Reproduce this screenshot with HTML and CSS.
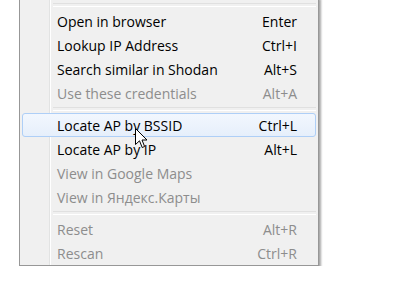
FILE: index.html
```html
<!DOCTYPE html>
<html lang="en">

<head>
    <meta charset="UTF-8">
    <meta name="viewport" content="width=device-width, initial-scale=1.0">
    <title>context menu</title>
    <link rel="stylesheet" href="styles.css">
</head>

<body>
    <div class="menu">

        <div class="sep"></div>

        <div class="item"><span class="label">Open in browser</span><span class="key">Enter</span></div>
        <div class="item"><span class="label">Lookup IP Address</span><span class="key">Ctrl+I</span></div>
        <div class="item"><span class="label">Search similar in Shodan</span><span class="key">Alt+S</span></div>
        <div class="item off"><span class="label">Use these credentials</span><span class="key">Alt+A</span></div>

        <div class="sep"></div>

        <div class="item hover"><span class="label">Locate AP by BSSID</span><span class="key">Ctrl+L</span>
            <svg class="cursor" width="13" height="21" viewBox="0 0 13 21">
                <path d="M0.5 0.5 L0.5 16.5 L4.5 12.8 L7.2 19.5 L9.6 18.5 L7 12 L12 12 Z" fill="#fff" stroke="#000" stroke-width="1" stroke-linejoin="miter" />
            </svg>
        </div>
        <div class="item"><span class="label">Locate AP by IP</span><span class="key">Alt+L</span></div>
        <div class="item off"><span class="label">View in Google Maps</span><span class="key"></span></div>
        <div class="item off"><span class="label">View in Яндекс.Карты</span><span class="key"></span></div>

        <div class="sep"></div>

        <div class="item off"><span class="label">Reset</span><span class="key">Alt+R</span></div>
        <div class="item off"><span class="label">Rescan</span><span class="key">Ctrl+R</span></div>

    </div>
</body>

</html>
```

FILE: styles.css
```css
* {
    box-sizing: border-box;
    padding: 0;
    margin: 0;
}

body {
    background: #fff;
    font-family: "Open Sans", "Noto Sans", sans-serif;
    font-size: 14px;
    color: #000;
}

/* menu box, its top is cut off by the window */
.menu {
    width: 300px;
    margin: -3px 0 0 19px;
    padding: 3px 2px 0 2px;
    background: #f0f0f0 linear-gradient(to right, transparent 29px, #e2e3e3 29px, #e2e3e3 30px, #fff 30px, #fff 31px, transparent 31px);
    border: 1px solid #979797;
    box-shadow: 2px 2px 2px rgba(0, 0, 0, 0.35);
}

.sep {
    height: 8px;
    display: flex;
    flex-direction: column;
    justify-content: center;
    padding-left: 31px;
}

.sep::before {
    content: "";
    display: block;
    height: 2px;
    border-top: 1px solid #e0e0e0;
    border-bottom: 1px solid #fff;
}

.item {
    position: relative;
    height: 24px;
    display: flex;
    align-items: center;
    justify-content: space-between;
    padding: 0 18px 0 34px;
    border: 1px solid transparent;
    border-radius: 3px;
}

.item.off {
    color: #8d8d8d;
}

.item.hover {
    border-color: #aecff7;
    background: linear-gradient(to bottom, #f2f7fe, #e6effb);
}

.cursor {
    position: absolute;
    left: 112px;
    top: 14px;
}
```
